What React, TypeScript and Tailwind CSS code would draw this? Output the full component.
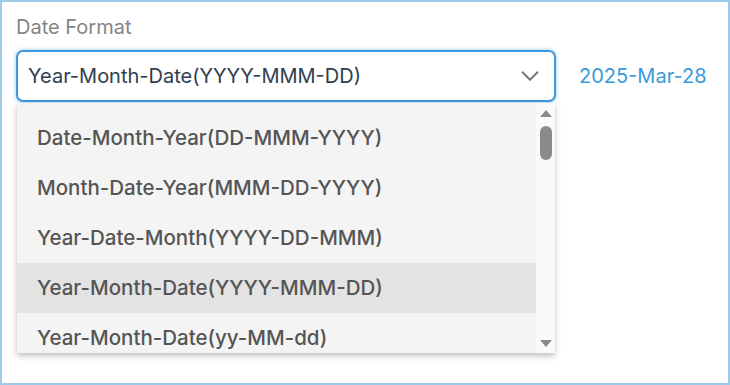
import { ChevronDown } from "lucide-react";

const formats = [
  "Date-Month-Year(DD-MMM-YYYY)",
  "Month-Date-Year(MMM-DD-YYYY)",
  "Year-Date-Month(YYYY-DD-MMM)",
  "Year-Month-Date(YYYY-MMM-DD)",
  "Year-Month-Date(yy-MM-dd)",
];

export default function App() {
  const selected = "Year-Month-Date(YYYY-MMM-DD)";

  return (
    <div className="w-[730px] h-[385px] bg-white border-2 border-[#9dcbeb] font-['Inter',sans-serif]">
      <div className="relative pl-[14px] pt-[11px]">
        {/* label */}
        <div className="text-[20px] leading-[28px] text-[#858585]">Date Format</div>

        {/* select row */}
        <div className="flex items-center mt-[9px]">
          <div className="flex items-center justify-between w-[540px] h-[52px] rounded-[7px] border-2 border-[#3d97db] shadow-[0_0_4px_rgba(61,151,219,0.55)] pl-[10px] pr-[9px]">
            <span className="text-[20px] text-[#2f3e4f]">{selected}</span>
            <ChevronDown size={30} strokeWidth={1.5} className="text-[#7a7070]" />
          </div>
          <span className="ml-[23px] text-[20px] text-[#3a9ad9]">2025-Mar-28</span>
        </div>

        {/* dropdown list */}
        <div className="absolute left-[15px] top-[101px] w-[538px] h-[250px] flex bg-[#f4f4f4] shadow-[0_3px_6px_rgba(0,0,0,0.25)] overflow-hidden">
          <div className="flex-1 pt-[10px]">
            {formats.map((f, key) => (
              <div
                key={key}
                className={`h-[50px] flex items-center pl-[20px] text-[20.5px] font-medium text-[#555555] ${key === 3 ? "bg-[#e3e3e3]" : ""}`}
              >
                {f}
              </div>
            ))}
          </div>
          <div className="w-[19px] bg-[#fafafa] flex flex-col items-center relative">
            <div className="mt-[7px] w-0 h-0 border-l-[6px] border-r-[6px] border-b-[7px] border-l-transparent border-r-transparent border-b-[#8a8a8a]" />
            <div className="mt-[9px] w-[12px] h-[34px] rounded-full bg-[#8a8a8a]" />
            <div className="absolute bottom-[6px] w-0 h-0 border-l-[6px] border-r-[6px] border-t-[7px] border-l-transparent border-r-transparent border-t-[#8a8a8a]" />
          </div>
        </div>
      </div>
    </div>
  );
}
